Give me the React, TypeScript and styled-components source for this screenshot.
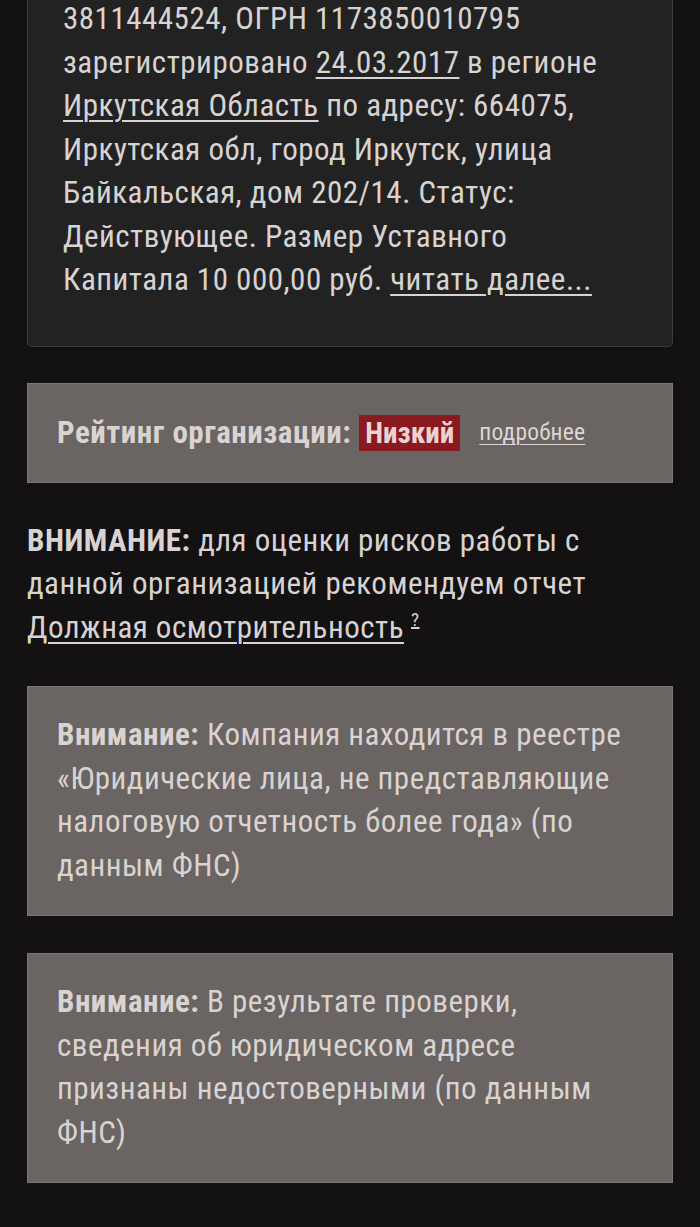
import styled, { createGlobalStyle } from "styled-components";

const GlobalStyle = createGlobalStyle`
  body {
    margin: 0;
    background: #131112;
    color: #d7d3d3;
    font-family: "Roboto Condensed", "Roboto", sans-serif;
    font-size: 31px;
    line-height: 43.5px;
    letter-spacing: 0.5px;
  }
`;

const Page = styled.div`
  padding: 0 27px 40px;
  display: flex;
  flex-direction: column;
  gap: 37px;
`;

const InfoCard = styled.div`
  margin-top: -3px;
  padding: 0 35px 44px;
  background: #232222;
  border: 1px solid #3b3a3a;
  border-top: none;
  border-radius: 0 0 5px 5px;
`;

const Link = styled.a`
  color: inherit;
  text-decoration: underline;
  text-decoration-thickness: 2px;
  text-underline-offset: 4px;
`;

const GreyCard = styled.div<{ $compact?: boolean }>`
  background: #6a6462;
  border: 1px solid #7b7573;
  color: #d9d3d1;
  padding: ${(p) => (p.$compact ? "27px 29px" : "26px 29px 28px")};
  ${(p) => p.$compact && "min-height: 44px; margin-top: -1px;"}
  display: ${(p) => (p.$compact ? "flex" : "block")};
  align-items: center;
`;

const Bold = styled.b`
  font-weight: 700;
`;

const Badge = styled.span`
  display: inline-block;
  margin-left: 8px;
  padding: 0 6px;
  height: 36px;
  line-height: 36px;
  font-size: 29px;
  letter-spacing: 0;
  background: #8a1a20;
  color: #ecd2d2;
  font-weight: 700;
`;

const SmallLink = styled(Link)`
  margin-left: 19px;
  font-size: 23.5px;
  letter-spacing: 0.2px;
  text-decoration-thickness: 1px;
  text-underline-offset: 4px;
  color: #dcd6d4;
`;

const Notice = styled.p`
  margin: -1px 0 0;
`;

const Hint = styled.sup`
  font-size: 19px;
  margin-left: 7px;
  text-decoration: underline;
  text-decoration-thickness: 2px;
  vertical-align: 12px;
  line-height: 0;
`;

export default function App() {
  return (
    <>
      <GlobalStyle />
      <Page>
        <InfoCard>
          3811444524, ОГРН 1173850010795
          <br />
          зарегистрировано <Link>24.03.2017</Link> в регионе
          <br />
          <Link>Иркутская Область</Link> по адресу: 664075,
          <br />
          Иркутская обл, город Иркутск, улица
          <br />
          Байкальская, дом 202/14. Статус:
          <br />
          Действующее. Размер Уставного
          <br />
          Капитала 10 000,00 руб. <Link>читать далее...</Link>
        </InfoCard>

        <GreyCard $compact>
          <Bold>Рейтинг организации:</Bold>
          <Badge>Низкий</Badge>
          <SmallLink>подробнее</SmallLink>
        </GreyCard>

        <Notice>
          <Bold>ВНИМАНИЕ:</Bold> для оценки рисков работы с
          <br />
          данной организацией рекомендуем отчет
          <br />
          <Link>Должная осмотрительность</Link>
          <Hint>?</Hint>
        </Notice>

        <GreyCard>
          <Bold>Внимание:</Bold> Компания находится в реестре
          <br />
          «Юридические лица, не представляющие
          <br />
          налоговую отчетность более года» (по
          <br />
          данным ФНС)
        </GreyCard>

        <GreyCard>
          <Bold>Внимание:</Bold> В результате проверки,
          <br />
          сведения об юридическом адресе
          <br />
          признаны недостоверными (по данным
          <br />
          ФНС)
        </GreyCard>
      </Page>
    </>
  );
}
